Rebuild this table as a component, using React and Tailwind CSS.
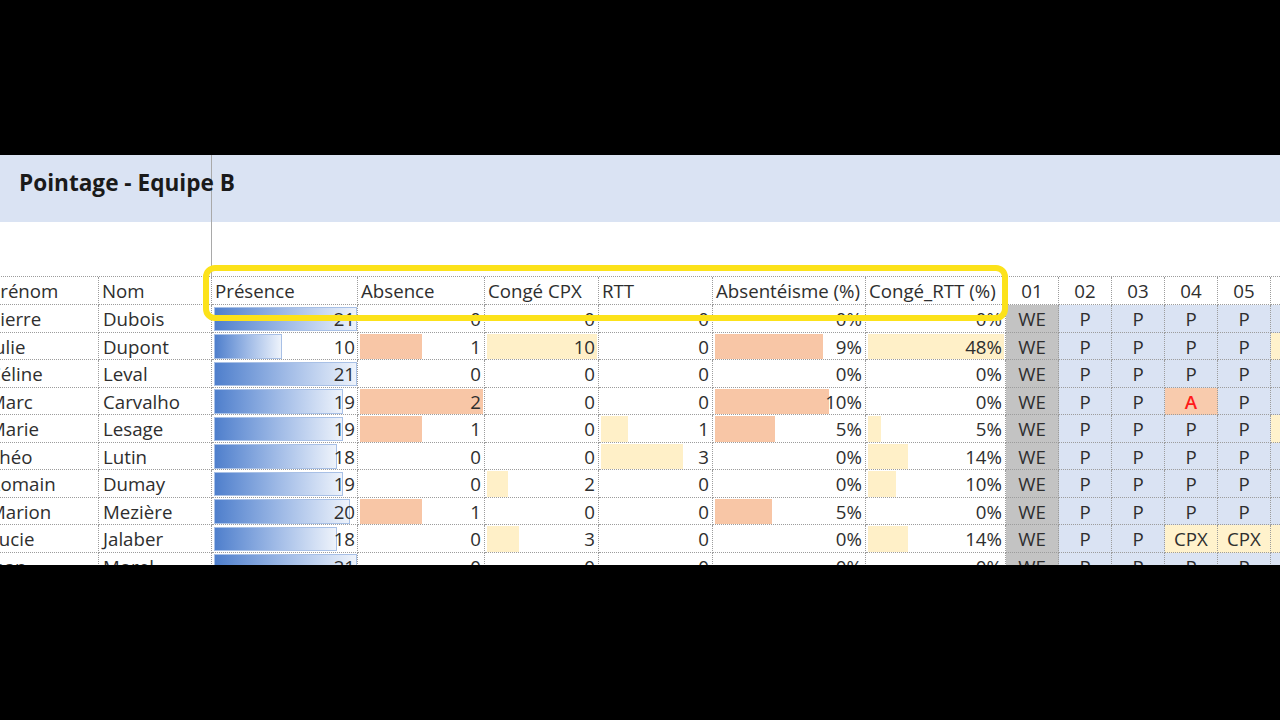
import React from 'react';

const font = { fontFamily: '"Open Sans", "Liberation Sans", sans-serif' };

const rows = [
    { prenom: 'Pierre', nom: 'Dubois', pres: 21, abs: 0, cpx: 0, rtt: 0, absp: '0%', absW: 0, crtt: '0%', crttW: 0, days: ['WE', 'P', 'P', 'P', 'P', 'P'] },
    { prenom: 'Julie', nom: 'Dupont', pres: 10, abs: 1, cpx: 10, rtt: 0, absp: '9%', absW: 108, crtt: '48%', crttW: 136, days: ['WE', 'P', 'P', 'P', 'P', 'CPX'] },
    { prenom: 'Céline', nom: 'Leval', pres: 21, abs: 0, cpx: 0, rtt: 0, absp: '0%', absW: 0, crtt: '0%', crttW: 0, days: ['WE', 'P', 'P', 'P', 'P', 'P'] },
    { prenom: 'Marc', nom: 'Carvalho', pres: 19, abs: 2, cpx: 0, rtt: 0, absp: '10%', absW: 114, crtt: '0%', crttW: 0, days: ['WE', 'P', 'P', 'A', 'P', 'P'] },
    { prenom: 'Marie', nom: 'Lesage', pres: 19, abs: 1, cpx: 0, rtt: 1, absp: '5%', absW: 60, crtt: '5%', crttW: 13, days: ['WE', 'P', 'P', 'P', 'P', 'RTT'] },
    { prenom: 'Théo', nom: 'Lutin', pres: 18, abs: 0, cpx: 0, rtt: 3, absp: '0%', absW: 0, crtt: '14%', crttW: 40, days: ['WE', 'P', 'P', 'P', 'P', 'P'] },
    { prenom: 'Romain', nom: 'Dumay', pres: 19, abs: 0, cpx: 2, rtt: 0, absp: '0%', absW: 0, crtt: '10%', crttW: 28, days: ['WE', 'P', 'P', 'P', 'P', 'P'] },
    { prenom: 'Marion', nom: 'Mezière', pres: 20, abs: 1, cpx: 0, rtt: 0, absp: '5%', absW: 57, crtt: '0%', crttW: 0, days: ['WE', 'P', 'P', 'P', 'P', 'P'] },
    { prenom: 'Lucie', nom: 'Jalaber', pres: 18, abs: 0, cpx: 3, rtt: 0, absp: '0%', absW: 0, crtt: '14%', crttW: 40, days: ['WE', 'P', 'P', 'CPX', 'CPX', 'CPX'] },
    { prenom: 'Jean', nom: 'Morel', pres: 21, abs: 0, cpx: 0, rtt: 0, absp: '0%', absW: 0, crtt: '0%', crttW: 0, days: ['WE', 'P', 'P', 'P', 'P', 'P'] },
];

const cell = 'h-[27.5px] border-r border-b border-dotted border-[#9c9c9c] leading-[27.5px] whitespace-nowrap overflow-hidden';

const dayStyle = {
    WE: 'bg-[#c3c3c3] text-[#2e2e2e]',
    P: 'bg-[#dae3f3] text-[#2e2e2e]',
    A: 'bg-[#f8cbad] text-[#ff1a1a] font-semibold',
    CPX: 'bg-[#fff2cc] text-[#2e2e2e]',
    RTT: 'bg-[#fff2cc] text-[#2e2e2e]',
};

// number cell with a data bar behind the value
const BarCell = ({ value, width, color }) => (
    <div className={`${cell} grid`}>
        <div className="col-start-1 row-start-1 py-[1px] pl-[2px]">
            {width > 0 && <div className={`h-full ${color}`} style={{ width }} />}
        </div>
        <div className="col-start-1 row-start-1 text-right pr-[3px]">{value}</div>
    </div>
);

const PresenceCell = ({ value }) => (
    <div className={`${cell} grid`}>
        <div className="col-start-1 row-start-1 py-[1.5px] pl-[2px]">
            <div
                className="h-full bg-gradient-to-r from-[#4f7fcc] via-[#9fbae6] to-[#eef3fb] border border-[#a8c0e6]"
                style={{ width: Math.round((value / 21) * 143) }}
            />
        </div>
        <div className="col-start-1 row-start-1 text-right pr-[2px]">{value}</div>
    </div>
);

const headers = ['Prénom', 'Nom', 'Présence', 'Absence', 'Congé CPX', 'RTT', 'Absentéisme (%)', 'Congé_RTT (%)'];
const dayHeaders = ['01', '02', '03', '04', '05', '06'];

export default function App() {
    return (
        <div className="w-[1280px] h-[720px] bg-black overflow-hidden flex flex-col" style={font}>
            <div className="h-[155px] shrink-0" />
            <div className="h-[410px] shrink-0 bg-white relative overflow-hidden text-[18.7px] text-[#2e2e2e]">
                {/* title band + blank row, frozen pane line at 212px */}
                <div className="flex h-[67px] bg-[#dae3f3]">
                    <div className="w-[212px] shrink-0 border-r border-[#a9a9a9] pl-[19px] pt-[17px]">
                        <div className="text-[22.6px] leading-[22px] font-bold text-[#1a1a1a] whitespace-nowrap">Pointage - Equipe B</div>
                    </div>
                </div>
                <div className="flex h-[54px]">
                    <div className="w-[212px] shrink-0 border-r border-[#a9a9a9]" />
                </div>

                <div className="-ml-[14px] grid grid-cols-[113px_113px_146px_127px_114px_114px_153px_140px_53px_53px_53px_53px_53px_53px] border-t border-dotted border-[#9c9c9c] w-max">
                    {headers.map((h) => (
                        <div key={h} className={`${cell} h-[28px] leading-[28px] pl-[3px]`}>{h}</div>
                    ))}
                    {dayHeaders.map((d) => (
                        <div key={d} className={`${cell} h-[28px] leading-[28px] text-center`}>{d}</div>
                    ))}

                    {rows.map((r) => (
                        <React.Fragment key={r.nom}>
                            <div className={`${cell} pl-[3px]`}>{r.prenom}</div>
                            <div className={`${cell} pl-[4px]`}>{r.nom}</div>
                            <PresenceCell value={r.pres} />
                            <BarCell value={r.abs} width={r.abs * 61.5} color="bg-[#f8c6a6]" />
                            <BarCell value={r.cpx} width={r.cpx === 10 ? 110 : r.cpx * 10.7} color="bg-[#fff0c8]" />
                            <BarCell value={r.rtt} width={r.rtt * 27.3} color="bg-[#fff0c8]" />
                            <BarCell value={r.absp} width={r.absW} color="bg-[#f8c6a6]" />
                            <BarCell value={r.crtt} width={r.crttW} color="bg-[#fff0c8]" />
                            {r.days.map((d, i) => (
                                <div key={i} className={`${cell} text-center ${dayStyle[d]}`}>{d}</div>
                            ))}
                        </React.Fragment>
                    ))}
                </div>

                {/* yellow highlight around the summary headers */}
                <div className="absolute left-[203px] top-[110px] w-[805px] h-[56px] border-[6px] border-[#fce21a] rounded-[12px]" />
            </div>
            <div className="flex-1" />
        </div>
    );
}
